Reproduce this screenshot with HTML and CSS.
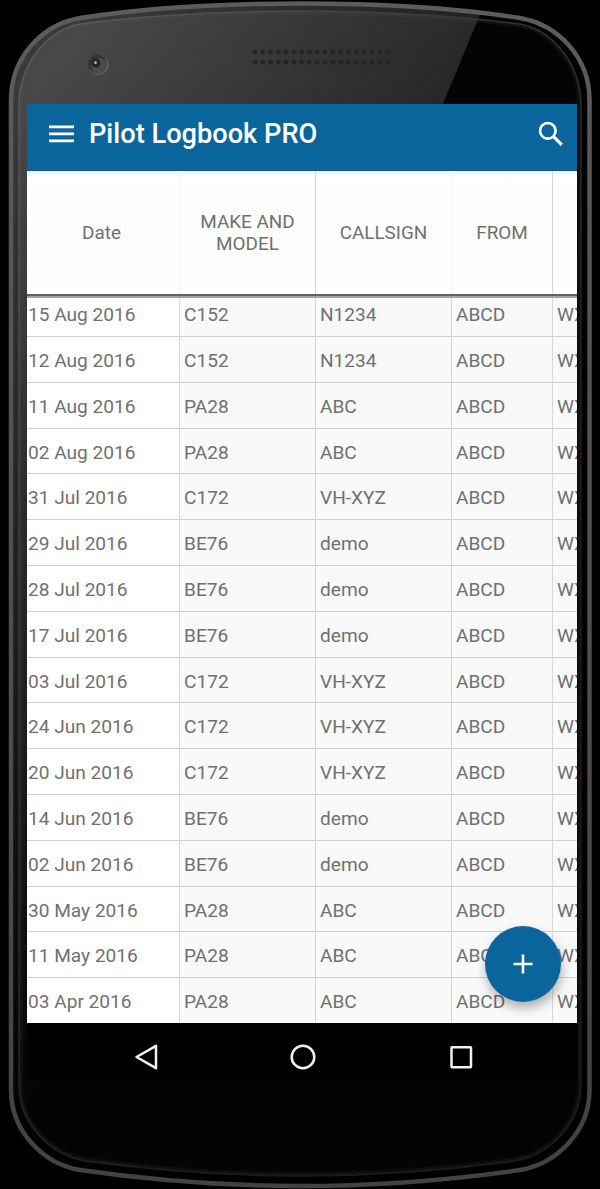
FILE: index.html
```
<!DOCTYPE html>
<html lang="en">
<head>
    <meta charset="UTF-8">
    <meta name="viewport" content="width=device-width, initial-scale=1.0">
    <title>Pilot Logbook PRO</title>
    <link rel="stylesheet" href="styles.css">
</head>
<body>
<div class="phone">
    <!-- phone body -->
    <svg class="frame" width="600" height="1189" viewBox="0 0 600 1189">
        <defs>
            <linearGradient id="glare" gradientUnits="userSpaceOnUse" x1="60" y1="60" x2="540" y2="482">
                <stop offset="0" stop-color="#484848"/>
                <stop offset="1" stop-color="#050505"/>
            </linearGradient>
            <linearGradient id="rim" x1="0" y1="0" x2="0" y2="1">
                <stop offset="0" stop-color="#5c5c5c"/>
                <stop offset="1" stop-color="#424242"/>
            </linearGradient>
            <linearGradient id="edge" gradientUnits="userSpaceOnUse" x1="0" y1="100" x2="600" y2="500">
                <stop offset="0" stop-color="#5c5c5c"/>
                <stop offset="0.55" stop-color="#303030"/>
                <stop offset="1" stop-color="#1c1c1c"/>
            </linearGradient>
            <pattern id="holes" x="252" y="49" width="7.8" height="10.3" patternUnits="userSpaceOnUse">
                <rect x="0.7" y="0.9" width="4.4" height="4.2" rx="1.2" fill="#242424"/>
            </pattern>
            <clipPath id="body">
                <path d="M11 100C11 58 41 25 80 18C150 7 220 3.500 300 3.500S450 7 520 18C559 25 589.500 58 589.500 100V1090C589.500 1132 556 1164 520 1170C450 1180 380 1186 300 1186S150 1180 80 1170C44 1164 11 1132 11 1090Z"/>
            </clipPath>
            <clipPath id="glass">
                <path d="M19 105C19 66 45 31 80 24C150 15 220 11 300 11S450 15 520 24C555 31 581 66 581 105V1085C581 1124 550 1155 515 1161C450 1170 380 1176 300 1176S150 1170 85 1161C50 1155 19 1124 19 1085Z"/>
            </clipPath>
            <filter id="soft"><feGaussianBlur stdDeviation="2"/></filter>
        </defs>
        <g clip-path="url(#body)">
            <rect width="600" height="1189" fill="#000"/>
            <path d="M0 0H486L0 1170Z" fill="url(#glare)" opacity="0.8"/>
        </g>
        <g clip-path="url(#glass)">
            <rect width="600" height="1189" fill="#040404"/>
            <path d="M0 0H486L0 1170Z" fill="url(#glare)"/>
            <path class="line glow" filter="url(#soft)" d="M19 105C19 66 45 31 80 24C150 15 220 11 300 11S450 15 520 24C555 31 581 66 581 105V1085C581 1124 550 1155 515 1161C450 1170 380 1176 300 1176S150 1170 85 1161C50 1155 19 1124 19 1085Z"/>
        </g>
        <path class="line" stroke="url(#edge)" stroke-width="1.4" d="M19 105C19 66 45 31 80 24C150 15 220 11 300 11S450 15 520 24C555 31 581 66 581 105V1085C581 1124 550 1155 515 1161C450 1170 380 1176 300 1176S150 1170 85 1161C50 1155 19 1124 19 1085Z"/>
        <path class="line" stroke="url(#rim)" stroke-width="4.5" d="M11 100C11 58 41 25 80 18C150 7 220 3.500 300 3.500S450 7 520 18C559 25 589.500 58 589.500 100V1090C589.500 1132 556 1164 520 1170C450 1180 380 1186 300 1186S150 1180 80 1170C44 1164 11 1132 11 1090Z"/>
        <!-- camera and speaker -->
        <circle cx="98.500" cy="65" r="10" fill="#666"/>
        <circle cx="97.500" cy="64" r="9.500" fill="#343434"/>
        <circle cx="99" cy="66" r="7.800" fill="#4c4c4c"/>
        <circle cx="96" cy="63" r="4.500" fill="#262626"/>
        <circle cx="95.500" cy="62.500" r="1.500" fill="#aaa"/>
        <rect x="252" y="49" width="141" height="17" fill="url(#holes)"/>
    </svg>

    <div class="screen">
        <div class="toolbar">
            <svg class="menu" width="26" height="18" viewBox="0 0 26 18">
                <path d="M0 1.900H25M0 8.900H25M0 15.900H25" stroke="#fff" stroke-width="2.600"/>
            </svg>
            <h1>Pilot Logbook PRO</h1>
            <svg class="search" width="26" height="26" viewBox="0 0 26 26" fill="none" stroke="#fff">
                <circle cx="9.800" cy="9.800" r="7.800" stroke-width="2.600"/>
                <path d="M15.300 15.300L23.800 23.800" stroke-width="3.200"/>
            </svg>
        </div>

        <div class="row head">
            <div class="date">Date</div>
            <div class="model">MAKE AND MODEL</div>
            <div class="callsign">CALLSIGN</div>
            <div class="from">FROM</div>
            <div class="to"></div>
        </div>

        <div class="list">
            <div class="row"><div class="date">15 Aug 2016</div><div class="model">C152</div><div class="callsign">N1234</div><div class="from">ABCD</div><div class="to">WX</div></div>
            <div class="row"><div class="date">12 Aug 2016</div><div class="model">C152</div><div class="callsign">N1234</div><div class="from">ABCD</div><div class="to">WX</div></div>
            <div class="row"><div class="date">11 Aug 2016</div><div class="model">PA28</div><div class="callsign">ABC</div><div class="from">ABCD</div><div class="to">WX</div></div>
            <div class="row"><div class="date">02 Aug 2016</div><div class="model">PA28</div><div class="callsign">ABC</div><div class="from">ABCD</div><div class="to">WX</div></div>
            <div class="row"><div class="date">31 Jul 2016</div><div class="model">C172</div><div class="callsign">VH-XYZ</div><div class="from">ABCD</div><div class="to">WX</div></div>
            <div class="row"><div class="date">29 Jul 2016</div><div class="model">BE76</div><div class="callsign">demo</div><div class="from">ABCD</div><div class="to">WX</div></div>
            <div class="row"><div class="date">28 Jul 2016</div><div class="model">BE76</div><div class="callsign">demo</div><div class="from">ABCD</div><div class="to">WX</div></div>
            <div class="row"><div class="date">17 Jul 2016</div><div class="model">BE76</div><div class="callsign">demo</div><div class="from">ABCD</div><div class="to">WX</div></div>
            <div class="row"><div class="date">03 Jul 2016</div><div class="model">C172</div><div class="callsign">VH-XYZ</div><div class="from">ABCD</div><div class="to">WX</div></div>
            <div class="row"><div class="date">24 Jun 2016</div><div class="model">C172</div><div class="callsign">VH-XYZ</div><div class="from">ABCD</div><div class="to">WX</div></div>
            <div class="row"><div class="date">20 Jun 2016</div><div class="model">C172</div><div class="callsign">VH-XYZ</div><div class="from">ABCD</div><div class="to">WX</div></div>
            <div class="row"><div class="date">14 Jun 2016</div><div class="model">BE76</div><div class="callsign">demo</div><div class="from">ABCD</div><div class="to">WX</div></div>
            <div class="row"><div class="date">02 Jun 2016</div><div class="model">BE76</div><div class="callsign">demo</div><div class="from">ABCD</div><div class="to">WX</div></div>
            <div class="row"><div class="date">30 May 2016</div><div class="model">PA28</div><div class="callsign">ABC</div><div class="from">ABCD</div><div class="to">WX</div></div>
            <div class="row"><div class="date">11 May 2016</div><div class="model">PA28</div><div class="callsign">ABC</div><div class="from">ABCD</div><div class="to">WX</div></div>
            <div class="row"><div class="date">03 Apr 2016</div><div class="model">PA28</div><div class="callsign">ABC</div><div class="from">ABCD</div><div class="to">WX</div></div>
        </div>

        <div class="navbar">
            <svg width="26" height="28" viewBox="0 0 26 28"><path d="M2.500 14L22 2.800V25.200Z"/></svg>
            <svg width="28" height="28" viewBox="0 0 28 28"><circle cx="14" cy="14" r="11.300"/></svg>
            <svg width="28" height="28" viewBox="0 0 28 28"><rect x="4.500" y="4.200" width="19.500" height="20" rx="0.500"/></svg>
        </div>

        <div class="fab">
            <svg width="20" height="20" viewBox="0 0 20 20"><path d="M0.500 10H19.500M10 0.500V19.500" stroke="#fff" stroke-width="2.600"/></svg>
        </div>
    </div>
</div>
</body>
</html>
```
FILE: styles.css
```
*{box-sizing: border-box;}
body{
    margin: 0;
    background-color: black;
    font-family: Roboto, sans-serif;
}
.phone{
    position: relative;
    width: 600px;
    height: 1189px;
    padding: 104px 23.5px 0 27px;
    overflow: hidden;
}
.frame{
    position: absolute;
    top: 0;
    left: 0;
}
.line{fill: none;}
.glow{
    stroke: #555;
    stroke-width: 3px;
    opacity: 0.45;
}
.screen{
    position: relative;
    height: 976px;
    overflow: hidden;
    background-color: black;
}

/* top bar */
.toolbar{
    display: flex;
    align-items: center;
    height: 67px;
    padding: 0 13px 7px 22px;
    background-color: #0b659d;
    border-bottom: 1px solid #17578a;
    color: white;
}
h1{
    flex: 1;
    margin: 0 0 0 14px;
    font-size: 27.2px;
    font-weight: 500;
    line-height: 34px;
}

/* logbook table */
.row{
    display: flex;
    height: 45.8px;
    line-height: 47.8px;
    font-size: 19.1px;
    color: #707070;
    white-space: nowrap;
}
.row div{
    flex: none;
    padding-left: 4px;
    overflow: hidden;
    border-right: 1px solid #d8d8d8;
    border-bottom: 1px solid #d0d0d0;
    background-color: #f9f9f9;
}
.row .date{
    width: 153px;
    padding-left: 1px;
    background-color: white;
}
.row .model{width: 136px;}
.row .callsign{width: 136px;}
.row .from{width: 101px;}
.row .to{
    flex: 1;
    min-width: 0;
    border-right: none;
}
.row.head{
    height: 125px;
    font-size: 18.9px;
    line-height: 22px;
    text-align: center;
    white-space: normal;
    border-bottom: 2px solid #626262;
}
.row.head div{
    display: flex;
    align-items: center;
    justify-content: center;
    padding: 1px 16px 0 16px;
    border-bottom: none;
    background: linear-gradient(#f1f1f8, #fefefe 6px);
}
.row.head .date{padding-right: 19px;}
.row.head .date, .row.head .callsign{border-right-color: #f5f5f5;}
.list{
    height: 727px;
    overflow: hidden;
    border-top: 2px solid #a2a2a2;
}
.list .row:first-child{
    height: 39px;
    line-height: 34px;
}

/* system buttons */
.navbar{
    display: flex;
    justify-content: space-between;
    align-items: center;
    height: 57px;
    padding: 10px 102px 0 107px;
    background-color: black;
}
.navbar svg{
    fill: none;
    stroke: #f2f2f2;
    stroke-width: 2.5px;
    stroke-linejoin: round;
}

/* floating add button */
.fab{
    position: absolute;
    right: 15.5px;
    bottom: 78px;
    display: flex;
    align-items: center;
    justify-content: center;
    width: 76px;
    height: 76px;
    border-radius: 50%;
    background-color: #0b659d;
    box-shadow: 1px 6px 11px rgba(0, 0, 0, 0.3);
}
```
